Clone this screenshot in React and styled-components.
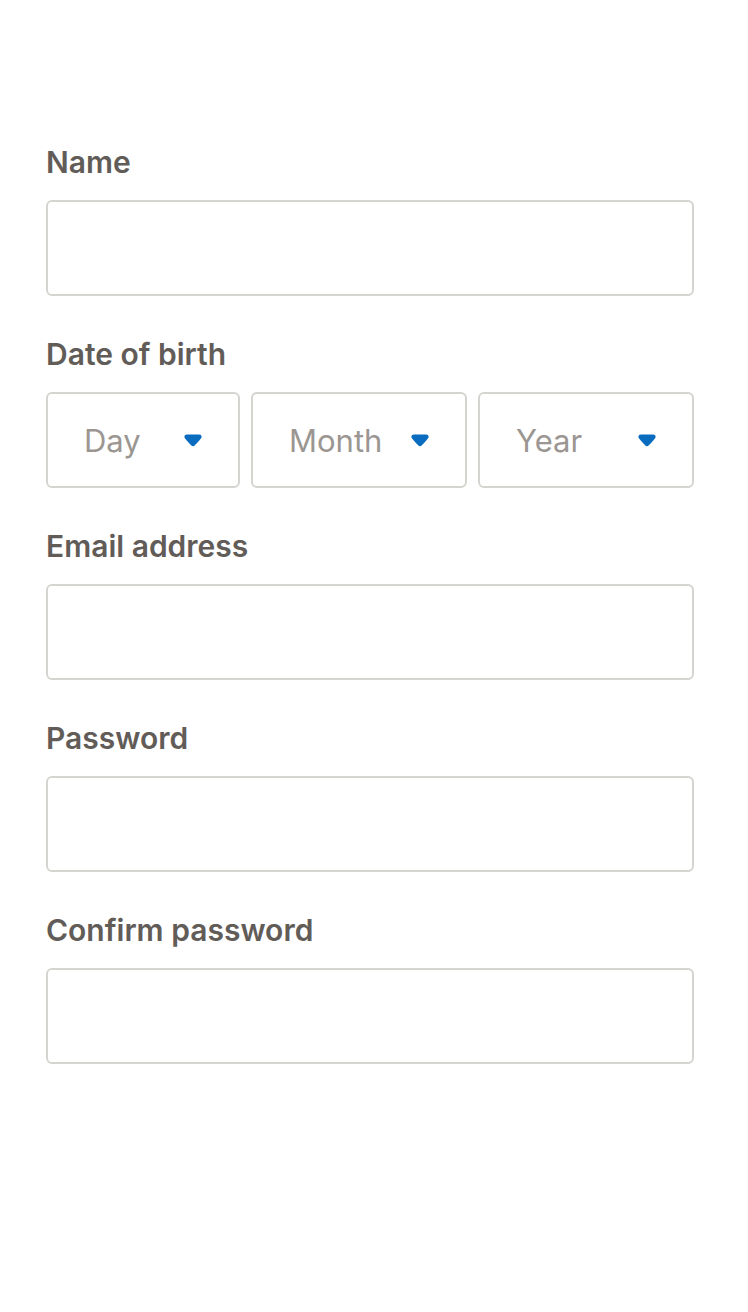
import React from 'react'
import styled, { createGlobalStyle } from 'styled-components'

const GlobalStyle = createGlobalStyle`
  html, body {
    margin: 0;
    padding: 0;
    background: #ffffff;
  }
  body {
    font-family: Inter, "Liberation Sans", sans-serif;
  }
`

const Page = styled.div`
  width: 748px;
  min-height: 1312px;
  box-sizing: border-box;
  padding: 140px 54px 0 46px;
`

const Field = styled.div`
  display: flex;
  flex-direction: column;
  margin-bottom: 36px;
`

const Label = styled.label`
  display: block;
  font-size: 30px;
  line-height: 40px;
  font-weight: 600;
  color: #625c58;
  margin-bottom: 20px;
  padding-top: 2px;
  height: 38px;
`

const TextInput = styled.input`
  box-sizing: border-box;
  width: 100%;
  height: 96px;
  border: 2px solid #d6d4d0;
  border-radius: 6px;
  background: #fff;
  font: inherit;
  font-size: 30px;
  padding: 0 36px;
  outline: none;
`

const SelectRow = styled.div`
  display: grid;
  grid-template-columns: 194px 216px 216px;
  justify-content: space-between;
`

const SelectBox = styled.div`
  box-sizing: border-box;
  height: 96px;
  border: 2px solid #d6d4d0;
  border-radius: 6px;
  display: flex;
  align-items: center;
  justify-content: space-between;
  padding: 0 ${(p) => p.$right}px 0 36px;
`

const Placeholder = styled.span`
  font-size: 31px;
  font-weight: 400;
  color: #9b9692;
`

const Arrow = () => (
  <svg width="18" height="13" viewBox="0 0 18 13">
    <path
      d="M3 0.5 H15 Q18 0.5 17.5 3.5 Q16.5 5.5 10.6 11.6 Q9 13 7.4 11.6 Q1.5 5.5 0.5 3.5 Q0 0.5 3 0.5 Z"
      fill="#0a6cbf"
    />
  </svg>
)

const Select = ({ label, right }) => (
  <SelectBox $right={right}>
    <Placeholder>{label}</Placeholder>
    <Arrow />
  </SelectBox>
)

export default function App() {
  return (
    <>
      <GlobalStyle />
      <Page>
        <Field>
          <Label>Name</Label>
          <TextInput type="text" />
        </Field>
        <Field>
          <Label>Date of birth</Label>
          <SelectRow>
            <Select label="Day" right={36} />
            <Select label="Month" right={36} />
            <Select label="Year" right={36} />
          </SelectRow>
        </Field>
        <Field>
          <Label>Email address</Label>
          <TextInput type="email" />
        </Field>
        <Field>
          <Label>Password</Label>
          <TextInput type="password" />
        </Field>
        <Field>
          <Label>Confirm password</Label>
          <TextInput type="password" />
        </Field>
      </Page>
    </>
  )
}
